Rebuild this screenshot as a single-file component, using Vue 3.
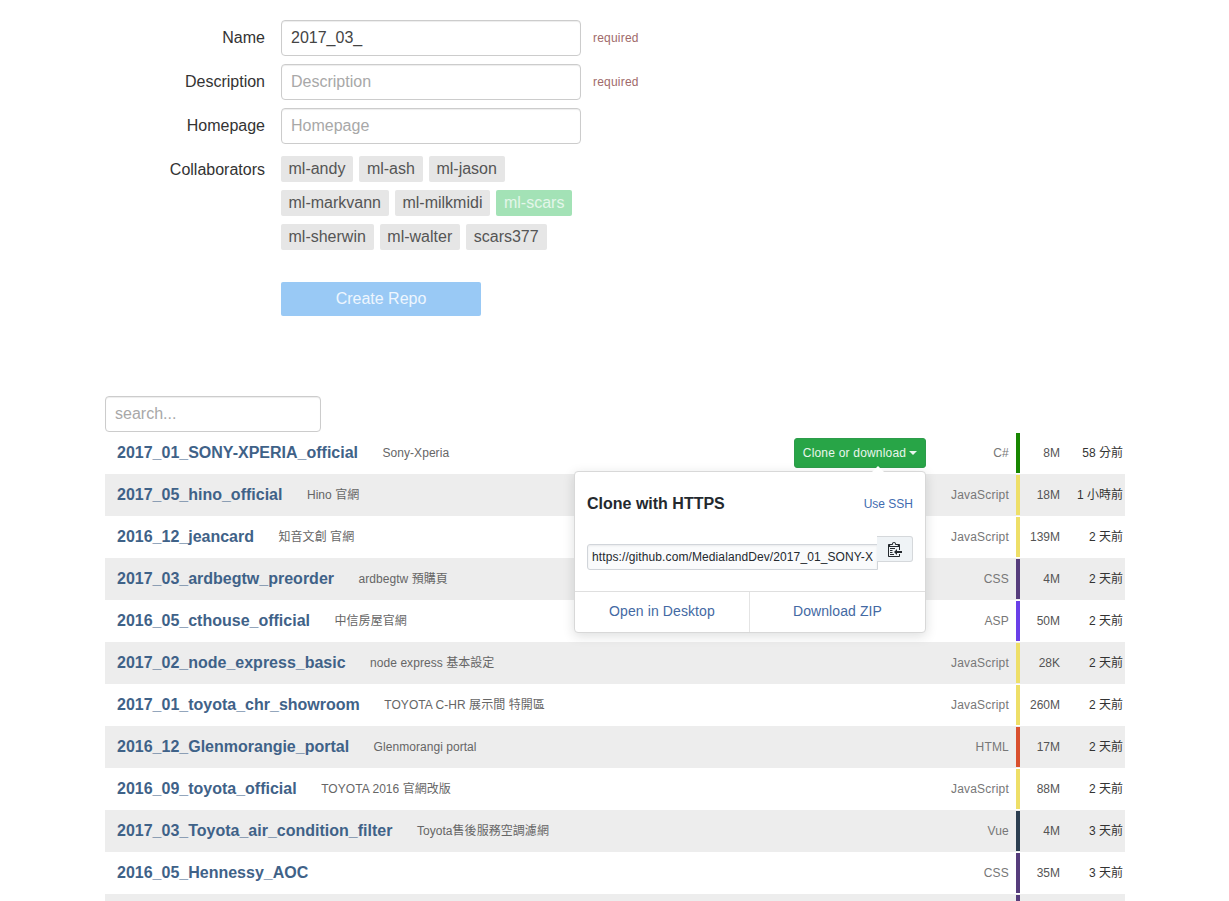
<template>
  <div class="page">
    <form class="repo-form" @submit.prevent>
      <div class="form-row">
        <label class="form-label">Name</label>
        <input class="form-input" type="text" value="2017_03_" />
        <span class="form-hint">required</span>
      </div>
      <div class="form-row">
        <label class="form-label">Description</label>
        <input class="form-input" type="text" placeholder="Description" />
        <span class="form-hint">required</span>
      </div>
      <div class="form-row">
        <label class="form-label">Homepage</label>
        <input class="form-input" type="text" placeholder="Homepage" />
      </div>
      <div class="form-row collab-row">
        <label class="form-label collab-label">Collaborators</label>
        <div class="tags">
          <span v-for="tag in collaborators" :key="tag" class="tag" :class="{ active: tag === 'ml-scars' }">{{ tag }}</span>
        </div>
      </div>
      <button class="create-btn" type="button">Create Repo</button>
    </form>

    <input class="search" type="text" placeholder="search..." />

    <div class="repo-list">
      <div v-for="(repo, index) in repos" :key="index" class="repo-row">
        <a class="repo-name">{{ repo.name }}</a>
        <span class="repo-desc">{{ repo.desc }}</span>
        <span class="spacer"></span>
        <button v-if="index === 0" class="clone-btn" type="button">Clone or download<i class="caret"></i></button>
        <span class="repo-lang">{{ repo.lang }}</span>
        <span class="lang-bar" :style="{ background: langColors[repo.bar || repo.lang] }"></span>
        <span class="repo-size">{{ repo.size }}</span>
        <span class="repo-time">{{ repo.time }}</span>

        <div v-if="index === 0" class="clone-pop">
          <div class="pop-head">
            <strong class="pop-title">Clone with HTTPS</strong>
            <a class="pop-ssh">Use SSH</a>
          </div>
          <div class="pop-url">
            <input class="url-input" type="text" value="https://github.com/MedialandDev/2017_01_SONY-XPERIA_official.git" readonly />
            <button class="copy-btn" type="button">
              <svg width="14" height="16" viewBox="0 0 14 16" fill="#24292e">
                <path d="M2 13h4v1H2v-1zm5-6H2v1h5V7zm2 3V8l-3 3 3 3v-2h5v-2H9zM4.5 9H2v1h2.5V9zM2 12h2.5v-1H2v1zm9 1h1v2c-.02.28-.11.52-.3.7-.19.18-.42.28-.7.3H1c-.55 0-1-.45-1-1V4c0-.55.45-1 1-1h3c0-1.11.89-2 2-2 1.11 0 2 .89 2 2h3c.55 0 1 .45 1 1v5h-1V6H1v9h10v-2zM2 5h8c0-.55-.45-1-1-1H8c-.55 0-1-.45-1-1s-.45-1-1-1-1 .45-1 1-.45 1-1 1H3c-.55 0-1 .45-1 1z" />
              </svg>
            </button>
          </div>
          <div class="pop-foot">
            <a class="foot-link">Open in Desktop</a>
            <a class="foot-link">Download ZIP</a>
          </div>
        </div>
      </div>
    </div>
  </div>
</template>

<script setup>
const collaborators = [
  'ml-andy',
  'ml-ash',
  'ml-jason',
  'ml-markvann',
  'ml-milkmidi',
  'ml-scars',
  'ml-sherwin',
  'ml-walter',
  'scars377',
];

const langColors = {
  'C#': '#178600',
  JavaScript: '#eedf68',
  CSS: '#563d7c',
  ASP: '#6a40e8',
  HTML: '#d9502e',
  Vue: '#2c3e50',
};

const repos = [
  { name: '2017_01_SONY-XPERIA_official', desc: 'Sony-Xperia', lang: 'C#', size: '8M', time: '58 分前' },
  { name: '2017_05_hino_official', desc: 'Hino 官網', lang: 'JavaScript', size: '18M', time: '1 小時前' },
  { name: '2016_12_jeancard', desc: '知音文創 官網', lang: 'JavaScript', size: '139M', time: '2 天前' },
  { name: '2017_03_ardbegtw_preorder', desc: 'ardbegtw 預購頁', lang: 'CSS', size: '4M', time: '2 天前' },
  { name: '2016_05_cthouse_official', desc: '中信房屋官網', lang: 'ASP', size: '50M', time: '2 天前' },
  { name: '2017_02_node_express_basic', desc: 'node express 基本設定', lang: 'JavaScript', size: '28K', time: '2 天前' },
  { name: '2017_01_toyota_chr_showroom', desc: 'TOYOTA C-HR 展示間 特開區', lang: 'JavaScript', size: '260M', time: '2 天前' },
  { name: '2016_12_Glenmorangie_portal', desc: 'Glenmorangi portal', lang: 'HTML', size: '17M', time: '2 天前' },
  { name: '2016_09_toyota_official', desc: 'TOYOTA 2016 官網改版', lang: 'JavaScript', size: '88M', time: '2 天前' },
  { name: '2017_03_Toyota_air_condition_filter', desc: 'Toyota售後服務空調濾網', lang: 'Vue', size: '4M', time: '3 天前' },
  { name: '2016_05_Hennessy_AOC', desc: '', lang: 'CSS', size: '35M', time: '3 天前' },
  { name: '', desc: '', lang: '', bar: 'CSS', size: '', time: '' },
];
</script>

<style>
html,
body {
  height: 901px;
  overflow: hidden;
  background: #fff;
}
</style>

<style scoped>
.page {
  box-sizing: border-box;
  width: 1125px;
  padding: 20px 0 0 105px;
  font-family: "Liberation Sans", Arial, "Noto Sans CJK TC", sans-serif;
  color: #333;
}

.repo-form {
  display: flex;
  flex-direction: column;
  margin-bottom: 80px;
}

.form-row {
  display: flex;
  align-items: center;
  height: 36px;
  margin-bottom: 8px;
}

.form-label {
  width: 160px;
  margin-right: 16px;
  text-align: right;
  font-size: 16px;
  color: #333;
}

.form-input {
  box-sizing: border-box;
  width: 300px;
  height: 36px;
  padding: 0 9px;
  border: 1px solid #ccc;
  border-radius: 4px;
  box-shadow: inset 0 1px 1px rgba(0, 0, 0, 0.075);
  font: 16px "Liberation Sans", Arial, sans-serif;
  color: #444;
  outline: none;
}

.form-input::placeholder,
.search::placeholder {
  color: #a8a8a8;
  opacity: 1;
}

.form-hint {
  margin-left: 12px;
  font-size: 12px;
  letter-spacing: 0.2px;
  color: #a06a6a;
}

.collab-row {
  align-items: flex-start;
  height: auto;
  margin: 4px 0 32px;
}

.collab-label {
  line-height: 28px;
}

.tags {
  display: flex;
  flex-wrap: wrap;
  gap: 8px 6px;
  width: 300px;
}

.tag {
  height: 26px;
  padding: 0 8px 0 7.5px;
  line-height: 25px;
  font-size: 16px;
  color: #555;
  background: #e6e6e6;
  border-radius: 2px;
}

.tag.active {
  color: #e4f6ea;
  background: #a3e2b6;
}

.create-btn {
  width: 200px;
  height: 34px;
  margin-left: 176px;
  padding: 0;
  border: 0;
  border-radius: 2px;
  background: #99c9f5;
  color: #eef6fe;
  font: 16px "Liberation Sans", Arial, sans-serif;
}

.search {
  display: block;
  box-sizing: border-box;
  width: 216px;
  height: 36px;
  padding: 0 9px;
  border: 1px solid #ccc;
  border-radius: 4px;
  box-shadow: inset 0 1px 1px rgba(0, 0, 0, 0.075);
  font: 16px "Liberation Sans", Arial, sans-serif;
  outline: none;
}

.repo-list {
  width: 1020px;
}

.repo-row {
  position: relative;
  display: flex;
  align-items: center;
  height: 42px;
  padding-left: 12px;
}

.repo-row:nth-child(even) {
  background: #ededed;
}

.repo-name {
  font-size: 16px;
  font-weight: 700;
  color: #3f6288;
}

.repo-desc {
  margin-left: 24.5px;
  font-size: 12px;
  line-height: 16px;
  letter-spacing: 0.05px;
  color: #666;
}

.spacer {
  flex: 1;
}

.clone-btn {
  display: flex;
  align-items: center;
  justify-content: center;
  box-sizing: border-box;
  width: 132px;
  height: 30px;
  padding: 0;
  border: 1px solid #2d9c4b;
  border-radius: 3px;
  background: #28a547;
  color: #eaf6ed;
  font: 12px "Liberation Sans", Arial, sans-serif;
  letter-spacing: 0.2px;
}

.caret {
  width: 0;
  height: 0;
  margin-left: 3px;
  border-top: 4px solid #eaf6ed;
  border-left: 4px solid transparent;
  border-right: 4px solid transparent;
}

.repo-lang {
  width: 83px;
  text-align: right;
  font-size: 12px;
  line-height: 16px;
  letter-spacing: 0.2px;
  color: #777;
}

.lang-bar {
  align-self: stretch;
  width: 4px;
  margin: 1px 0 1px 7px;
}

.repo-size {
  width: 40px;
  text-align: right;
  font-size: 12px;
  line-height: 16px;
  color: #555;
}

.repo-time {
  box-sizing: border-box;
  width: 65px;
  padding-right: 2px;
  text-align: right;
  font-size: 12px;
  line-height: 16px;
  color: #333;
}

.clone-pop {
  position: absolute;
  left: 469px;
  top: 39px;
  z-index: 5;
  box-sizing: border-box;
  width: 352px;
  height: 162px;
  border: 1px solid #d8d8d8;
  border-radius: 4px;
  background: #fff;
  box-shadow: 0 3px 12px rgba(27, 31, 35, 0.15);
}

.clone-pop::before {
  content: "";
  position: absolute;
  left: 297px;
  top: -6px;
  width: 0;
  height: 0;
  border-bottom: 6px solid #fff;
  border-left: 6px solid transparent;
  border-right: 6px solid transparent;
}

.pop-head {
  display: flex;
  align-items: center;
  justify-content: space-between;
  height: 18px;
  padding: 23px 12px 0 12px;
}

.pop-title {
  font-size: 16px;
  color: #24292e;
}

.pop-ssh {
  font-size: 12px;
  color: #3f6cb0;
}

.pop-url {
  display: flex;
  align-items: flex-start;
  padding: 23px 12px 0 12px;
}

.url-input {
  box-sizing: border-box;
  width: 291px;
  height: 26px;
  margin-top: 8px;
  padding: 0 4px;
  border: 1px solid #d1d5da;
  border-radius: 3px 0 0 3px;
  background: #fafbfc;
  box-shadow: inset 0 1px 2px rgba(27, 31, 35, 0.075);
  font: 12px "Liberation Sans", Arial, sans-serif;
  letter-spacing: 0.1px;
  color: #24292e;
  outline: none;
}

.copy-btn {
  display: flex;
  align-items: center;
  justify-content: center;
  box-sizing: border-box;
  width: 36px;
  height: 26px;
  margin-left: -1px;
  padding: 0;
  border: 1px solid #d5d8db;
  border-left: 0;
  border-radius: 0 3px 3px 0;
  background: #eff3f6;
}

.pop-foot {
  display: flex;
  height: 40px;
  margin-top: 21px;
  border-top: 1px solid #dfdfdf;
}

.foot-link {
  flex: 1;
  line-height: 39px;
  text-align: center;
  font-size: 14px;
  letter-spacing: 0.1px;
  color: #4369a3;
}

.foot-link:first-child {
  flex: 0 0 174px;
  border-right: 1px solid #e4e4e4;
}
</style>
